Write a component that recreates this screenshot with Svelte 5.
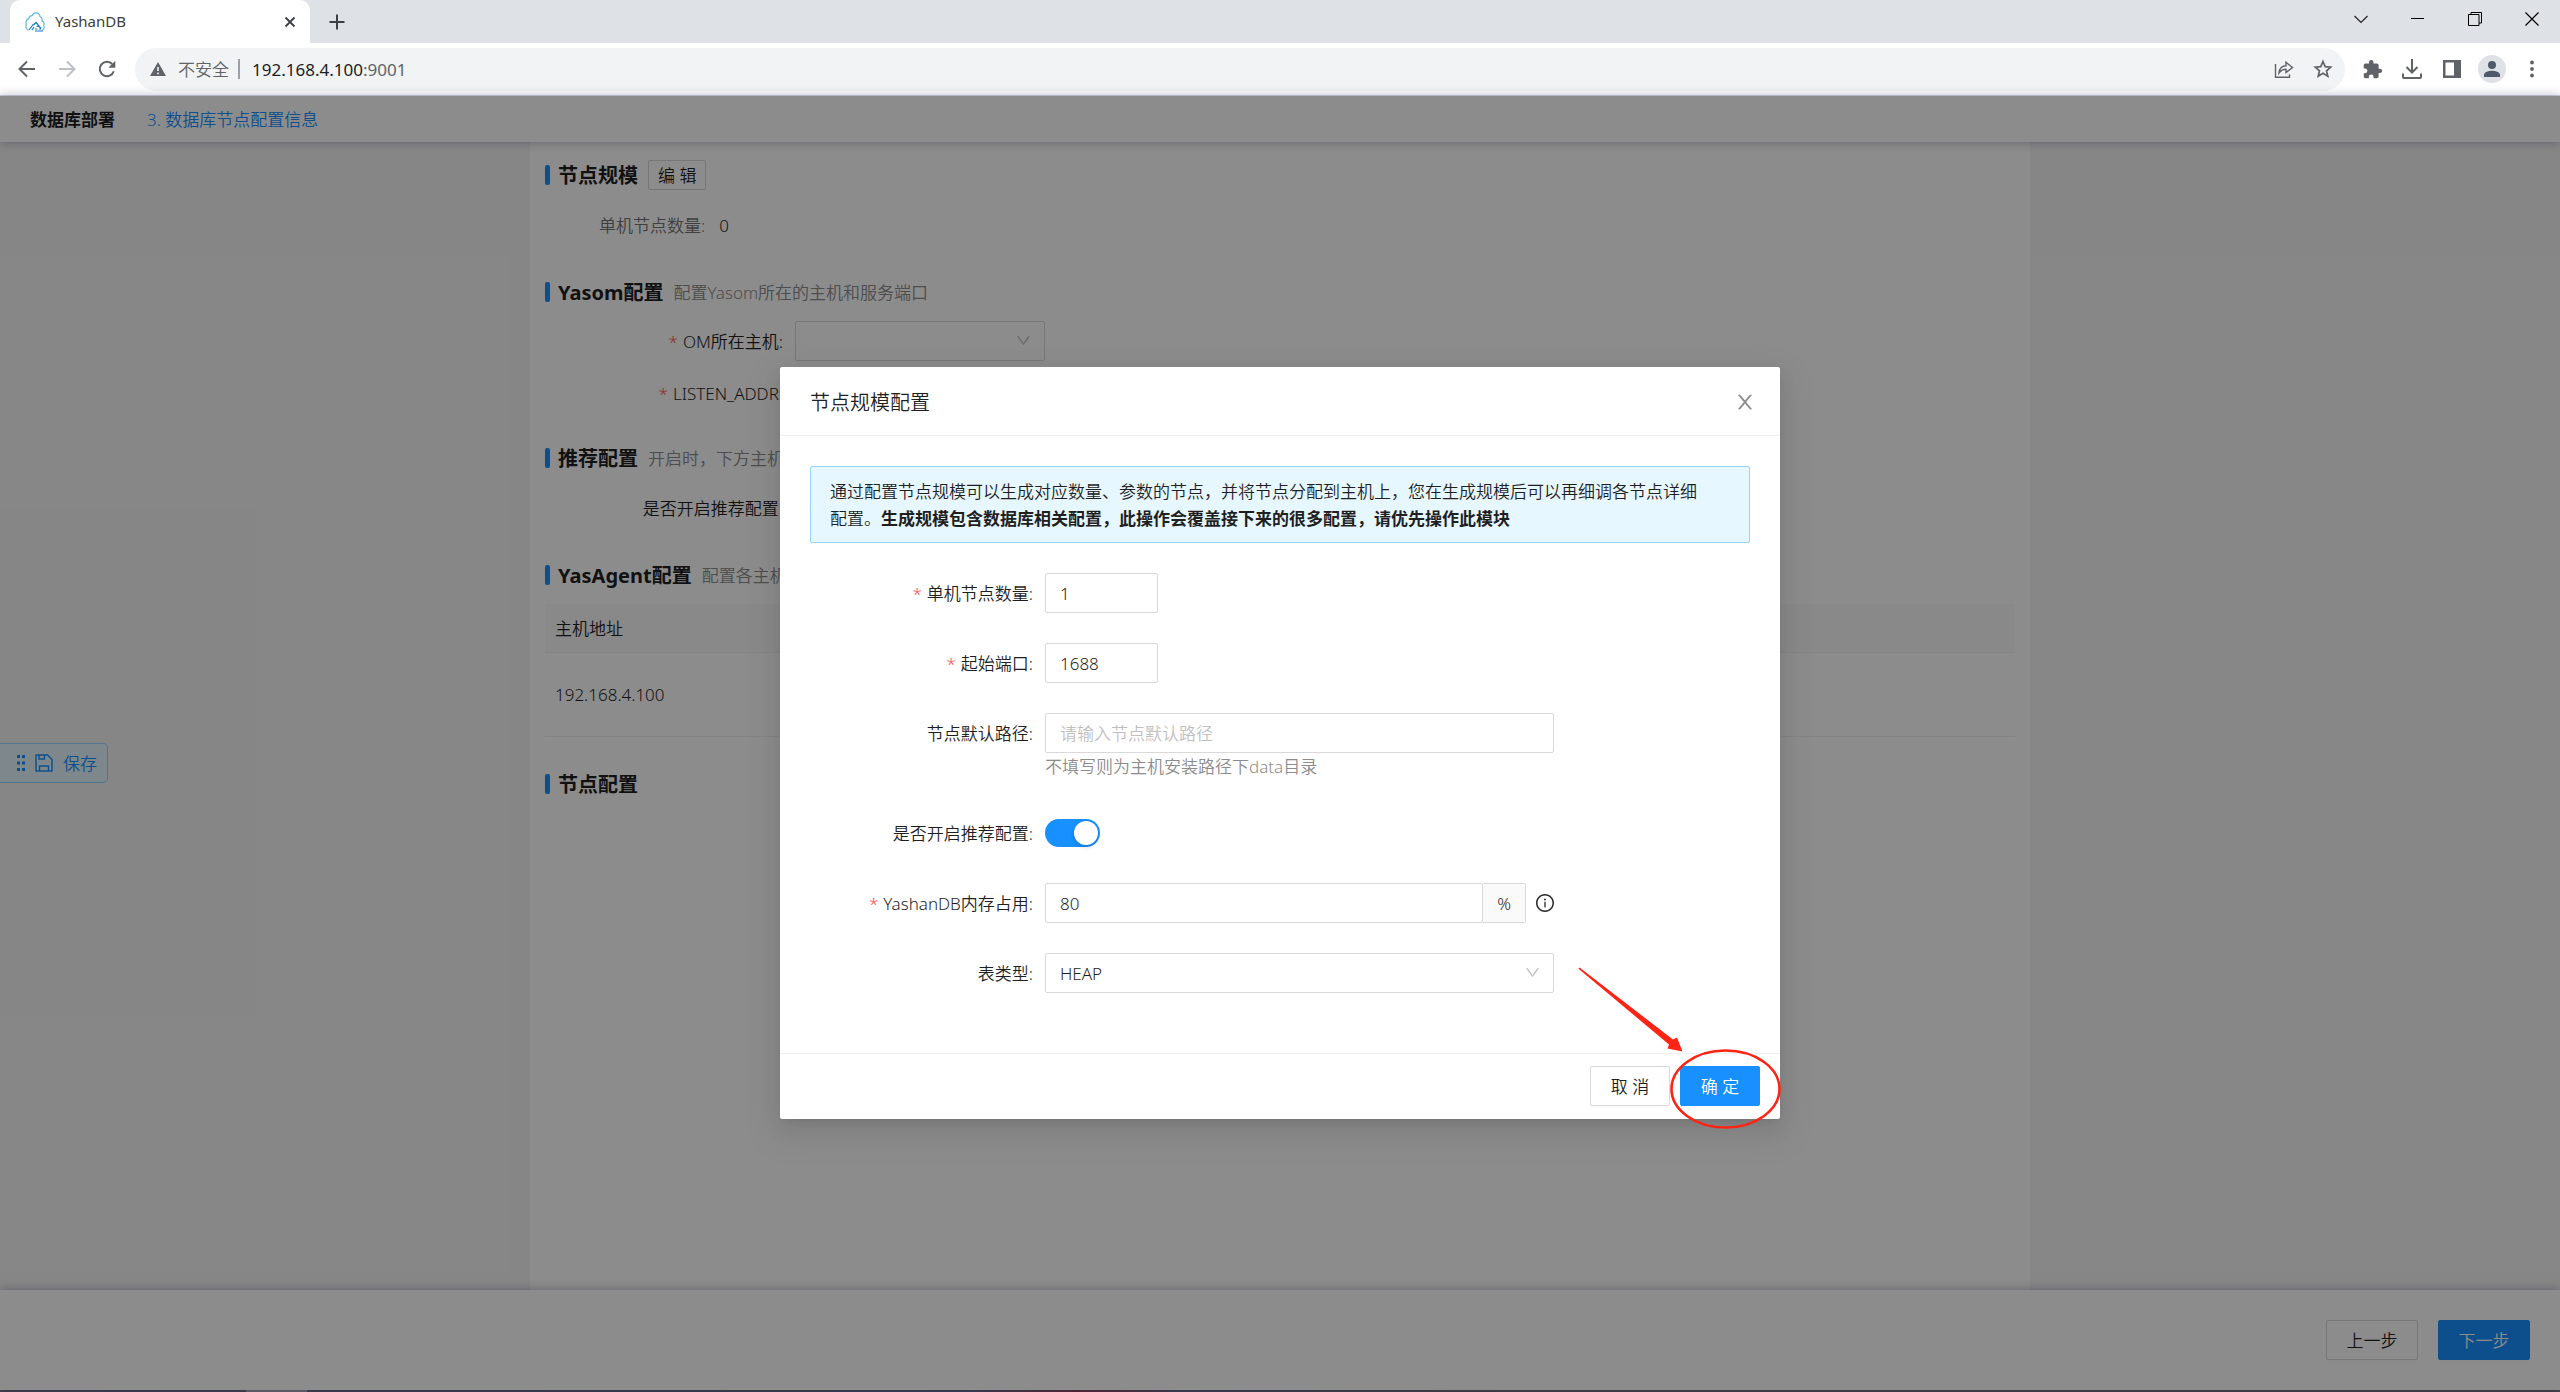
<script lang="ts">
	let nodeCount = $state('1');
	let startPort = $state('1688');
	let nodePath = $state('');
	let recommended = $state(true);
	let memory = $state('80');
	let tableType = $state('HEAP');

	const agents = [{ address: '192.168.4.100' }];

	const downPath =
		'M884 256h-75c-5.1 0-9.9 2.5-12.9 6.6L512 654.2 227.9 262.6c-3-4.1-7.8-6.6-12.9-6.6h-75c-6.5 0-10.3 7.4-6.5 12.7l352.6 486.1c12.8 17.6 39 17.6 51.7 0l352.6-486.1c3.9-5.3.1-12.7-6.4-12.7z';
</script>

{#snippet chevron()}
	<svg class="select-arrow" viewBox="64 64 896 896" aria-hidden="true"><path d={downPath} /></svg>
{/snippet}

<div class="window">
	<div class="tab-strip">
		<div class="tab">
			<svg class="favicon" viewBox="0 0 20 20" fill="none">
				<path d="M3.5 18.2C.6 17.2.3 13.8 1.4 12.3.3 9.8 1.5 7.3 3.7 6.7 4.2 4.8 5.7 3.6 7.2 3.7 7.9 1.7 9.4.8 11.2.9 13.3 1 14.8 2.5 15 4.6 16.8 5.5 17.4 7.2 17 8.9 19 10 19.4 12 18.6 13.5 19.8 15.5 18.7 17.7 16.8 18.2" stroke="#62b9e8" stroke-width="1.2" />
				<path d="M4 18l4.500-6M7 18l2-3M8.500 13l2.500-2.500 5 6M11.500 14.500h2.500M10 17h2.500M14 17h2M10 19h8" stroke="#1b78c8" stroke-width="1.2" />
			</svg>
			<span class="tab-title">YashanDB</span>
			<button class="tab-close" aria-label="关闭标签页">
				<svg width="12" height="12" viewBox="0 0 12 12"><path d="M1.500 1.500l9 9M10.500 1.500l-9 9" stroke="#3c4043" stroke-width="1.8" /></svg>
			</button>
		</div>
		<button class="new-tab" aria-label="新标签页">
			<svg width="16" height="16" viewBox="0 0 16 16"><path d="M8 .5v15M.5 8h15" stroke="#3c4043" stroke-width="2" /></svg>
		</button>
		<div class="window-controls">
			<button aria-label="搜索标签页">
				<svg width="14" height="14" viewBox="0 0 14 14" fill="none"><path d="M.5 4L7 10.500 13.500 4" stroke="#202124" stroke-width="1.2" /></svg>
			</button>
			<button aria-label="最小化">
				<svg width="14" height="14" viewBox="0 0 14 14"><path d="M0 6.500h13" stroke="#000" /></svg>
			</button>
			<button aria-label="还原">
				<svg width="14" height="14" viewBox="0 0 14 14" fill="none"><path d="M.5 2.500h10.500v11H.5zM3 2.500V.5h10.500v10.500H11" stroke="#000" /></svg>
			</button>
			<button aria-label="关闭">
				<svg width="14" height="14" viewBox="0 0 14 14"><path d="M.5.5l13 13M13.500.5l-13 13" stroke="#000" stroke-width="1.2" /></svg>
			</button>
		</div>
	</div>

	<div class="toolbar">
		<button class="tool" aria-label="后退">
			<svg width="18" height="18" viewBox="0 0 18 18" fill="none"><path d="M17 9H2M9 1.500L1.500 9 9 16.500" stroke="#5f6368" stroke-width="2" /></svg>
		</button>
		<button class="tool" aria-label="前进">
			<svg width="18" height="18" viewBox="0 0 18 18" fill="none"><path d="M1 9h15M9 1.500L16.500 9 9 16.500" stroke="#bdc1c6" stroke-width="2" /></svg>
		</button>
		<button class="tool" aria-label="重新加载">
			<svg width="18" height="18" viewBox="0 0 18 18" fill="none">
				<path d="M15.800 11.200A7.200 7.200 0 1 1 14.200 4" stroke="#5f6368" stroke-width="2" />
				<path d="M17.300.8v7h-7z" fill="#5f6368" />
			</svg>
		</button>
		<div class="address">
			<svg width="16" height="14" viewBox="0 0 16 14"><path d="M8 0l8 14H0z" fill="#5f6368" /><path d="M8 5v4M8 10.500v1.700" stroke="#f1f3f4" stroke-width="1.6" /></svg>
			<span class="insecure">不安全</span>
			<span class="address-divider"></span>
			<span class="url">192.168.4.100<span class="port">:9001</span></span>
			<div class="address-actions">
				<button aria-label="分享">
					<svg width="20" height="20" viewBox="0 0 20 20" fill="none" stroke="#5f6368" stroke-width="1.4"><path d="M1.500 5v13.300h14v-3M5 14c.4-4.500 3-7 7-7.200V3.300L18.500 8.500 12 13.500V10.300c-3 0-5 1-7 3.700z" /></svg>
				</button>
				<button aria-label="收藏">
					<svg width="20" height="20" viewBox="0 0 20 20" fill="none" stroke="#5f6368" stroke-width="1.7"><path d="M10 2.500l2.200 5.100 5.500.5-4.200 3.700 1.300 5.400-4.800-2.900-4.800 2.900 1.300-5.400L2.300 8.100l5.500-.5z" /></svg>
				</button>
			</div>
		</div>
		<button class="tool" aria-label="扩展程序">
			<svg width="21" height="21" viewBox="0 0 24 24" fill="#5f6368"><path d="M20.500 11H19V7a2 2 0 0 0-2-2h-4V3.500a2.500 2.500 0 0 0-5 0V5H4a2 2 0 0 0-2 2v3.800h1.500a2.700 2.700 0 0 1 0 5.400H2V20a2 2 0 0 0 2 2h3.800v-1.500a2.700 2.700 0 0 1 5.400 0V22H17a2 2 0 0 0 2-2v-4h1.500a2.500 2.500 0 0 0 0-5z" /></svg>
		</button>
		<button class="tool" aria-label="下载">
			<svg width="20" height="20" viewBox="0 0 20 20" fill="none" stroke="#5f6368" stroke-width="2"><path d="M10 0v13M4.500 8l5.500 5.500L15.500 8M1 14.500V18a1 1 0 0 0 1 1h16a1 1 0 0 0 1-1v-3.500" /></svg>
		</button>
		<button class="tool" aria-label="侧边栏">
			<svg width="18" height="18" viewBox="0 0 18 18"><path d="M0 0h18v18H0z" fill="#5f6368" /><path d="M2.500 2.500h8.500v13H2.500z" fill="#fff" /></svg>
		</button>
		<button class="tool" aria-label="用户">
			<svg width="28" height="28" viewBox="0 0 28 28"><circle cx="14" cy="14" r="14" fill="#dee1e6" /><circle cx="14" cy="10" r="4" fill="#4e5a6b" /><path d="M6 22v-2c0-3 5-4.200 8-4.200s8 1.200 8 4.200v2z" fill="#4e5a6b" /></svg>
		</button>
		<button class="tool" aria-label="菜单">
			<svg width="4" height="18" viewBox="0 0 4 18" fill="#5f6368"><circle cx="2" cy="2.500" r="1.900" /><circle cx="2" cy="9" r="1.900" /><circle cx="2" cy="15.500" r="1.900" /></svg>
		</button>
	</div>

	<div class="page">
		<header class="page-header">
			<strong>数据库部署</strong>
			<span class="step">3. 数据库节点配置信息</span>
		</header>

		<main class="content">
			<section>
				<h2>节点规模 <button class="edit">编 辑</button></h2>
				<p class="summary"><span>单机节点数量:</span> 0</p>
			</section>

			<section>
				<h2>Yasom配置 <small>配置Yasom所在的主机和服务端口</small></h2>
				<div class="host-row">
					<label class="required" for="om-host">OM所在主机:</label>
					<div class="select-box">
						<select id="om-host"><option value=""></option></select>
						{@render chevron()}
					</div>
				</div>
				<div class="host-row">
					<label class="required" for="listen-addr">LISTEN_ADDR:</label>
					<input id="listen-addr" type="text" />
				</div>
			</section>

			<section>
				<h2>推荐配置 <small>开启时，下方主机</small></h2>
				<div class="host-row switch-row">
					<span>是否开启推荐配置:</span>
				</div>
			</section>

			<section>
				<h2>YasAgent配置 <small>配置各主机</small></h2>
				<table>
					<thead>
						<tr><th>主机地址</th></tr>
					</thead>
					<tbody>
						{#each agents as agent (agent.address)}
							<tr><td>{agent.address}</td></tr>
						{/each}
					</tbody>
				</table>
			</section>

			<section>
				<h2>节点配置</h2>
			</section>
		</main>

		<button class="save">
			<svg width="8" height="16" viewBox="0 0 8 16" fill="#1890ff">
				<path d="M0 0h3v3H0zM5 0h3v3H5zM0 6.500h3v3H0zM5 6.500h3v3H5zM0 13h3v3H0zM5 13h3v3H5z" />
			</svg>
			<svg width="18" height="18" viewBox="0 0 18 18" fill="none" stroke="#1890ff" stroke-width="1.4">
				<path d="M1 1h11.500L17 5.500V17H1zM4 1v4h5.500V1M4.500 17v-5h9v5" />
			</svg>
			<span>保存</span>
		</button>

		<footer class="page-footer">
			<button class="btn">上一步</button>
			<button class="btn primary">下一步</button>
		</footer>

		<div class="mask">
			<div class="modal" role="dialog" aria-modal="true" aria-labelledby="modal-title">
				<div class="modal-header">
					<h3 id="modal-title">节点规模配置</h3>
					<button class="modal-close" aria-label="关闭对话框">
						<svg width="20" height="20" viewBox="64 64 896 896" fill="#8c8c8c"><path d="M563.8 512l262.5-312.9c4.4-5.2.7-13.1-6.1-13.1h-79.8c-4.7 0-9.2 2.1-12.3 5.7L511.6 449.8 295.1 191.7c-3-3.6-7.5-5.7-12.3-5.7H203c-6.8 0-10.5 7.9-6.1 13.1L459.4 512 196.9 824.9A7.95 7.95 0 0 0 203 838h79.8c4.7 0 9.2-2.1 12.3-5.7l216.5-258.1 216.5 258.1c3 3.6 7.5 5.7 12.3 5.7h79.8c6.8 0 10.5-7.9 6.1-13.1L563.8 512z" /></svg>
					</button>
				</div>

				<div class="modal-body">
					<div class="alert">
						通过配置节点规模可以生成对应数量、参数的节点，并将节点分配到主机上，您在生成规模后可以再细调各节点详细配置。<b>生成规模包含数据库相关配置，此操作会覆盖接下来的很多配置，请优先操作此模块</b>
					</div>

					<div class="form-row">
						<label class="required" for="node-count">单机节点数量:</label>
						<input id="node-count" class="short" type="text" bind:value={nodeCount} />
					</div>
					<div class="form-row">
						<label class="required" for="start-port">起始端口:</label>
						<input id="start-port" class="short" type="text" bind:value={startPort} />
					</div>
					<div class="form-row">
						<label for="node-path">节点默认路径:</label>
						<input id="node-path" type="text" placeholder="请输入节点默认路径" bind:value={nodePath} />
						<div class="help">不填写则为主机安装路径下data目录</div>
					</div>
					<div class="form-row">
						<label for="recommended">是否开启推荐配置:</label>
						<input id="recommended" class="switch" type="checkbox" bind:checked={recommended} />
					</div>
					<div class="form-row">
						<label class="required" for="memory">YashanDB内存占用:</label>
						<div class="memory">
							<input id="memory" type="text" bind:value={memory} />
							<span class="addon">%</span>
							<svg width="18" height="18" viewBox="64 64 896 896" fill="#262626">
								<path d="M512 64C264.6 64 64 264.6 64 512s200.6 448 448 448 448-200.6 448-448S759.4 64 512 64zm0 820c-205.4 0-372-166.6-372-372s166.6-372 372-372 372 166.6 372 372-166.6 372-372 372z" />
								<path d="M464 336a48 48 0 1 0 96 0 48 48 0 1 0-96 0zm72 112h-48c-4.4 0-8 3.6-8 8v272c0 4.4 3.6 8 8 8h48c4.4 0 8-3.6 8-8V456c0-4.4-3.6-8-8-8z" />
							</svg>
						</div>
					</div>
					<div class="form-row">
						<label for="table-type">表类型:</label>
						<div class="select-box">
							<select id="table-type" bind:value={tableType}><option>HEAP</option></select>
							{@render chevron()}
						</div>
					</div>
				</div>

				<div class="modal-footer">
					<button class="btn">取 消</button>
					<button class="btn primary">确 定</button>
				</div>

				<svg class="pointer" width="220" height="180" viewBox="0 0 220 180" aria-hidden="true">
					<path d="M9.500 7.500L103 79.500l4-2 5.500 14L97.500 88.500l1.500-4L8.500 8.800z" fill="#ff2314" />
					<ellipse cx="155.500" cy="129" rx="54" ry="38.500" fill="none" stroke="#ff2314" stroke-width="2.6" />
				</svg>
			</div>
		</div>
	</div>

	<div class="taskbar"><span></span></div>
</div>

<style>
	:global(body) {
		margin: 0;
	}

	.window {
		display: flex;
		flex-direction: column;
		height: 100vh;
		overflow: hidden;
		font-family: 'Noto Sans', 'Noto Sans CJK SC', sans-serif;
		font-size: 17px;
		font-weight: 350;
		line-height: 27px;
		color: #1f1f1f;
	}

	.window * {
		box-sizing: border-box;
	}

	button,
	input,
	select {
		font: inherit;
		color: inherit;
	}

	button {
		display: flex;
		align-items: center;
		justify-content: center;
		padding: 0;
		border: none;
		background: transparent;
		cursor: pointer;
	}

	/* browser frame */
	.tab-strip {
		display: flex;
		flex: none;
		height: 43px;
		padding-left: 10px;
		background: #dee1e6;
	}

	.tab {
		display: flex;
		align-items: center;
		width: 300px;
		padding: 0 12px 0 15px;
		border-radius: 10px 10px 0 0;
		background: #fff;
	}

	.favicon {
		width: 20px;
		height: 20px;
	}

	.tab-title {
		flex: 1;
		padding-left: 10px;
		font-size: 15px;
		font-weight: 400;
		color: #3c4043;
	}

	.tab-close {
		width: 16px;
		height: 16px;
	}

	.new-tab {
		width: 34px;
		margin-left: 10px;
	}

	.window-controls {
		display: flex;
		height: 38px;
		margin-left: auto;
	}

	.window-controls button {
		width: 57px;
	}

	.toolbar {
		display: flex;
		align-items: center;
		flex: none;
		height: 53px;
		padding: 0 8px 0 7px;
		border-bottom: 1px solid #d0d3d8;
		background: #fff;
	}

	.tool {
		width: 40px;
		height: 40px;
	}

	.address {
		display: flex;
		align-items: center;
		flex: 1;
		height: 43px;
		margin: 0 7px 0 8px;
		padding: 0 12px 0 15px;
		border-radius: 22px;
		background: #f1f3f4;
		color: #5f6368;
	}

	.insecure {
		margin-left: 12px;
	}

	.address-divider {
		width: 2px;
		height: 20px;
		margin: 0 12px 0 9px;
		background: #9aa0a6;
	}

	.url {
		font-weight: 400;
		color: #202124;
	}

	.port {
		color: #5f6368;
	}

	.address-actions {
		display: flex;
		gap: 19px;
		margin-left: auto;
	}

	/* deployment page */
	.page {
		position: relative;
		display: flex;
		flex-direction: column;
		flex: 1;
		min-height: 0;
		background: #f5f5f5;
	}

	.page-header {
		position: relative;
		display: flex;
		align-items: center;
		gap: 32px;
		flex: none;
		height: 46px;
		padding: 0 30px;
		background: #fff;
		box-shadow: 0 0 10px rgba(0, 0, 64, 0.3);
	}

	strong,
	b {
		font-weight: 700;
	}

	.step {
		color: #1890ff;
	}

	.content {
		flex: 1;
		width: 100%;
		max-width: 1500px;
		margin: 0 auto;
		padding: 18px 15px;
		background: #fff;
	}

	section {
		margin-bottom: 30px;
	}

	h2 {
		display: flex;
		align-items: center;
		gap: 10px;
		height: 30px;
		margin: 0 0 14px;
		font-size: 20px;
		font-weight: 700;
	}

	h2::before {
		content: '';
		width: 5px;
		height: 20px;
		margin-right: -2px;
		border-radius: 2px;
		background: #1890ff;
	}

	h2 small {
		font-size: 17px;
		font-weight: 350;
		color: #8c8c8c;
	}

	.edit {
		height: 30px;
		padding: 0 9px;
		border: 1px solid #d9d9d9;
		border-radius: 2px;
		font-weight: 350;
		font-size: 17px;
	}

	.summary {
		display: flex;
		align-items: center;
		gap: 14px;
		height: 43px;
		margin: 0;
		padding-left: 54px;
	}

	.summary span {
		color: #737373;
	}

	.host-row {
		display: grid;
		grid-template-columns: 238px 250px;
		column-gap: 12px;
		align-items: center;
		margin-top: 12px;
		text-align: right;
	}

	h2 + .host-row {
		margin-top: 0;
	}

	.switch-row {
		height: 43px;
	}

	.required::before {
		content: '*';
		margin-right: 5px;
		color: #ff4d4f;
	}

	input,
	select {
		width: 100%;
		height: 40px;
		padding: 0 14px;
		border: 1px solid #d9d9d9;
		border-radius: 2px;
		background: #fff;
		outline: none;
		appearance: none;
	}

	input::placeholder {
		color: #bfbfbf;
	}

	.select-box {
		position: relative;
		display: flex;
	}

	.select-arrow {
		position: absolute;
		top: 12px;
		right: 14px;
		width: 15px;
		height: 15px;
		fill: #bfbfbf;
		pointer-events: none;
	}

	table {
		width: 100%;
		margin-bottom: 32px;
		border-spacing: 0;
		text-align: left;
	}

	th,
	td {
		padding: 0 10px;
		border-bottom: 1px solid #f0f0f0;
		font-weight: 350;
	}

	th {
		height: 49px;
		background: #fafafa;
	}

	td {
		height: 84px;
	}

	.save {
		position: absolute;
		top: 50%;
		left: 0;
		gap: 10px;
		height: 40px;
		padding: 0 10px 0 17px;
		border: 1px solid #91d5ff;
		border-left: none;
		border-radius: 0 5px 5px 0;
		background: #e6f7ff;
		color: #1890ff;
	}

	.page-footer {
		position: relative;
		display: flex;
		justify-content: flex-end;
		gap: 20px;
		flex: none;
		padding: 30px;
		background: #fff;
		box-shadow: 0 0 10px rgba(0, 0, 64, 0.3);
	}

	.btn {
		min-width: 80px;
		height: 40px;
		padding: 0 17px;
		border: 1px solid #d9d9d9;
		border-radius: 2px;
		background: #fff;
		box-shadow: 0 2px 0 rgba(0, 0, 0, 0.02);
	}

	.page-footer .btn {
		min-width: 92px;
	}

	.btn.primary {
		border-color: #1890ff;
		background: #1890ff;
		color: #fff;
	}

	.mask {
		position: absolute;
		inset: 0;
		display: flex;
		align-items: center;
		justify-content: center;
		background: rgba(0, 0, 0, 0.45);
	}

	/* node scale dialog */
	.modal {
		position: relative;
		width: 1000px;
		border-radius: 2px;
		background: #fff;
		box-shadow:
			0 4px 8px -5px rgba(0, 0, 0, 0.12),
			0 8px 20px rgba(0, 0, 0, 0.08),
			0 12px 35px 10px rgba(0, 0, 0, 0.05);
	}

	.modal-header {
		display: flex;
		align-items: center;
		justify-content: space-between;
		height: 69px;
		padding: 2px 25px 0 30px;
		border-bottom: 1px solid #f0f0f0;
	}

	h3 {
		margin: 0;
		font-size: 20px;
		font-weight: 350;
	}

	.modal-body {
		padding: 30px;
	}

	.alert {
		margin-bottom: 30px;
		padding: 11px 40px 10px 19px;
		border: 1px solid #91d5ff;
		border-radius: 2px;
		background: #e6f7ff;
	}

	.form-row {
		display: grid;
		grid-template-columns: 6fr 13fr 5fr;
		align-items: center;
		min-height: 40px;
		margin-bottom: 30px;
	}

	.form-row label {
		padding-right: 12px;
		text-align: right;
	}

	.short {
		width: 113px;
	}

	.help {
		grid-column: 2;
		height: 30px;
		color: #8c8c8c;
	}

	.switch {
		display: flex;
		justify-content: flex-end;
		width: 55px;
		height: 28px;
		margin: 0;
		padding: 2px;
		border: none;
		border-radius: 14px;
		background: #bfbfbf;
	}

	.switch:checked {
		background: #1890ff;
	}

	.switch::before {
		content: '';
		width: 24px;
		height: 24px;
		border-radius: 50%;
		background: #fff;
		box-shadow: 0 2px 4px rgba(0, 35, 11, 0.2);
	}

	.switch:not(:checked) {
		justify-content: flex-start;
	}

	.memory {
		display: flex;
		align-items: center;
	}

	.memory input {
		flex: 1;
		min-width: 0;
	}

	.addon {
		display: flex;
		align-items: center;
		justify-content: center;
		width: 43px;
		height: 40px;
		margin-right: 10px;
		border: 1px solid #d9d9d9;
		border-left: none;
		border-radius: 0 2px 2px 0;
		background: #fafafa;
	}

	.modal-footer {
		display: flex;
		justify-content: flex-end;
		gap: 10px;
		padding: 12px 20px 13px;
		border-top: 1px solid #f0f0f0;
	}

	.pointer {
		position: absolute;
		right: -10px;
		bottom: -21px;
		pointer-events: none;
	}

	.taskbar {
		display: flex;
		flex: none;
		height: 2px;
		padding-left: 246px;
		background: linear-gradient(90deg, #43434d 0%, #3e4250 38%, #5a2c35 42%, #40414d 46%, #474747 62%, #474747 100%);
	}

	.taskbar span {
		width: 61px;
		background: #68676c;
	}
</style>
